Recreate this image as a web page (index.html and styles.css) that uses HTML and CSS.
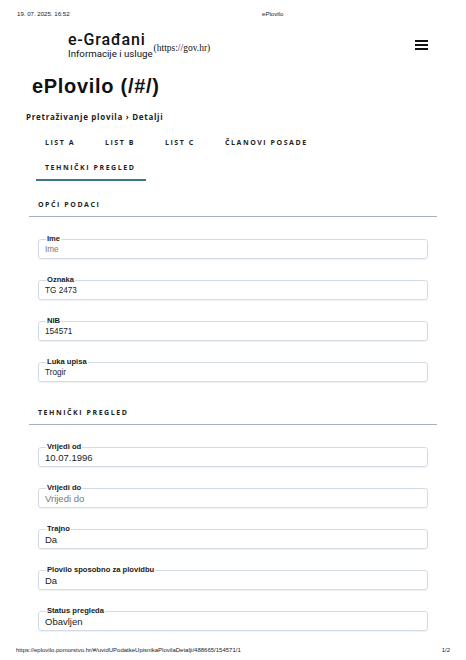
FILE: index.html
```html
<!DOCTYPE html>
<html lang="hr">
<head>
<meta charset="utf-8">
<title>ePlovilo</title>
<link rel="stylesheet" href="styles.css">
</head>
<body>
<div class="print-head">
  <span>19. 07. 2025. 16:52</span>
  <span>ePlovilo</span>
</div>

<header class="site-head">
  <a class="brand" href="#">
    <span class="brand-text">
      <span class="brand-name">e-Građani</span>
      <span class="brand-sub">Informacije i usluge</span>
    </span>
    <span class="brand-alt">(https://gov.hr)</span>
  </a>
  <span class="menu" aria-label="Izbornik">
    <svg width="13" height="10" viewBox="0 0 13 10"><rect x="0" y="0" width="13" height="2"/><rect x="0" y="4" width="13" height="2"/><rect x="0" y="8" width="13" height="2"/></svg>
  </span>
</header>

<main class="content">
  <h1 class="page-title">ePlovilo (/#/)</h1>
  <nav class="crumbs">Pretraživanje plovila › Detalji</nav>

  <ul class="tabs">
    <li class="tab">LIST A</li>
    <li class="tab">LIST B</li>
    <li class="tab">LIST C</li>
    <li class="tab">ČLANOVI POSADE</li>
    <li class="tab tab-active">TEHNIČKI PREGLED</li>
  </ul>

  <div class="sections">
    <section class="section">
      <h2 class="section-title">OPĆI PODACI</h2>
      <div class="fields">
        <div class="field"><span class="field-label">Ime</span><span class="field-value placeholder">Ime</span></div>
        <div class="field"><span class="field-label">Oznaka</span><span class="field-value">TG 2473</span></div>
        <div class="field"><span class="field-label">NIB</span><span class="field-value">154571</span></div>
        <div class="field"><span class="field-label">Luka upisa</span><span class="field-value">Trogir</span></div>
      </div>
    </section>

    <section class="section">
      <h2 class="section-title">TEHNIČKI PREGLED</h2>
      <div class="fields fields-lg">
        <div class="field"><span class="field-label">Vrijedi od</span><span class="field-value">10.07.1996</span></div>
        <div class="field"><span class="field-label">Vrijedi do</span><span class="field-value placeholder">Vrijedi do</span></div>
        <div class="field"><span class="field-label">Trajno</span><span class="field-value">Da</span></div>
        <div class="field"><span class="field-label">Plovilo sposobno za plovidbu</span><span class="field-value">Da</span></div>
        <div class="field"><span class="field-label">Status pregleda</span><span class="field-value">Obavljen</span></div>
      </div>
    </section>
  </div>
</main>

<footer class="print-foot">
  <span>https://eplovilo.pomorstvo.hr/#/uvidUPodatkeUpisnikaPlovilaDetalji/488665/154571/1</span>
  <span>1/2</span>
</footer>
</body>
</html>
```

FILE: styles.css
```css
* { box-sizing: border-box; }

html, body { margin: 0; padding: 0; background: #fff; }

body {
  font-family: "Liberation Sans", Arial, sans-serif;
  color: #222;
  min-height: 660px;
  display: flex;
  flex-direction: column;
}

/* print header / footer */
.print-head {
  display: grid;
  grid-template-columns: 245px auto;
  padding: 10px 0 0 17px;
  font-size: 6.1px;
  line-height: 8px;
  color: #222;
}

.print-foot {
  margin-top: auto;
  display: flex;
  justify-content: space-between;
  padding: 0 16px 6px 16px;
  font-size: 6px;
  line-height: 8px;
  color: #222;
}

/* site header */
.site-head {
  display: flex;
  align-items: center;
  justify-content: space-between;
  padding: 13px 38px 0 68px;
}

.brand {
  display: flex;
  align-items: flex-end;
  color: #111;
  text-decoration: none;
}

.brand-text {
  display: flex;
  flex-direction: column;
}

.brand-name {
  font-family: Roboto, "Liberation Sans", sans-serif;
  font-weight: 500;
  font-size: 16px;
  line-height: 17px;
  letter-spacing: 0.8px;
}

.brand-sub {
  font-family: Roboto, "Liberation Sans", sans-serif;
  font-size: 9.7px;
  line-height: 11px;
}

.brand-alt {
  font-family: "Liberation Serif", "Times New Roman", serif;
  font-size: 9.5px;
  line-height: 11px;
  margin: 0 0 5px 1px;
}

.menu { display: flex; }
.menu svg { fill: #111; }

/* main */
.content {
  padding: 0 29px 0 26px;
}

.page-title {
  margin: 15px 0 0 0;
  padding-left: 6px;
  font-size: 20px;
  line-height: 24px;
  letter-spacing: 0.7px;
  font-weight: bold;
  color: #111;
}

.crumbs {
  margin-top: 14px;
  font-family: "Open Sans", sans-serif;
  font-weight: 700;
  font-size: 8px;
  line-height: 10px;
  letter-spacing: 0.7px;
  color: #222;
}

.tabs {
  list-style: none;
  margin: 9px 20px 0 10px;
  padding: 0;
  display: flex;
  flex-wrap: wrap;
}

.tab {
  min-width: 60px;
  padding: 0 11px 0 9px;
  height: 25px;
  line-height: 23px;
  border-bottom: 2px solid transparent;
  font-family: "Open Sans", sans-serif;
  font-weight: 700;
  font-size: 7px;
  letter-spacing: 1.55px;
  color: #1e1e1e;
}

.tab-active {
  border-bottom-color: #3f7883;
}

.sections {
  margin-top: 18px;
  display: flex;
  flex-direction: column;
  gap: 25px;
}

.section {
  margin-left: 3px;
}

.section-title {
  margin: 0;
  padding: 0 0 6px 9px;
  border-bottom: 1px solid #a3b2c0;
  font-family: "Open Sans", sans-serif;
  font-weight: 700;
  font-size: 7px;
  line-height: 11px;
  letter-spacing: 1.55px;
  color: #1e1e1e;
}

.fields {
  margin-top: 22px;
  padding: 0 9px;
  display: flex;
  flex-direction: column;
  gap: 21px;
}

.field {
  position: relative;
  height: 20px;
  border: 1px solid #d3dce5;
  border-radius: 3px;
  box-shadow: 0 1px 1px rgba(60, 80, 100, 0.08);
  display: flex;
  align-items: center;
  padding: 1px 0 0 6px;
}

.field-label {
  position: absolute;
  left: 7px;
  top: -5px;
  padding: 0 1px;
  background: #fff;
  font-weight: bold;
  font-size: 7.6px;
  line-height: 8px;
  color: #1a1a1a;
}

.field-value {
  font-size: 8.2px;
  line-height: 10px;
  color: #222;
}

.fields-lg .field-value {
  font-size: 9.5px;
}

.placeholder {
  color: #777;
}
```
